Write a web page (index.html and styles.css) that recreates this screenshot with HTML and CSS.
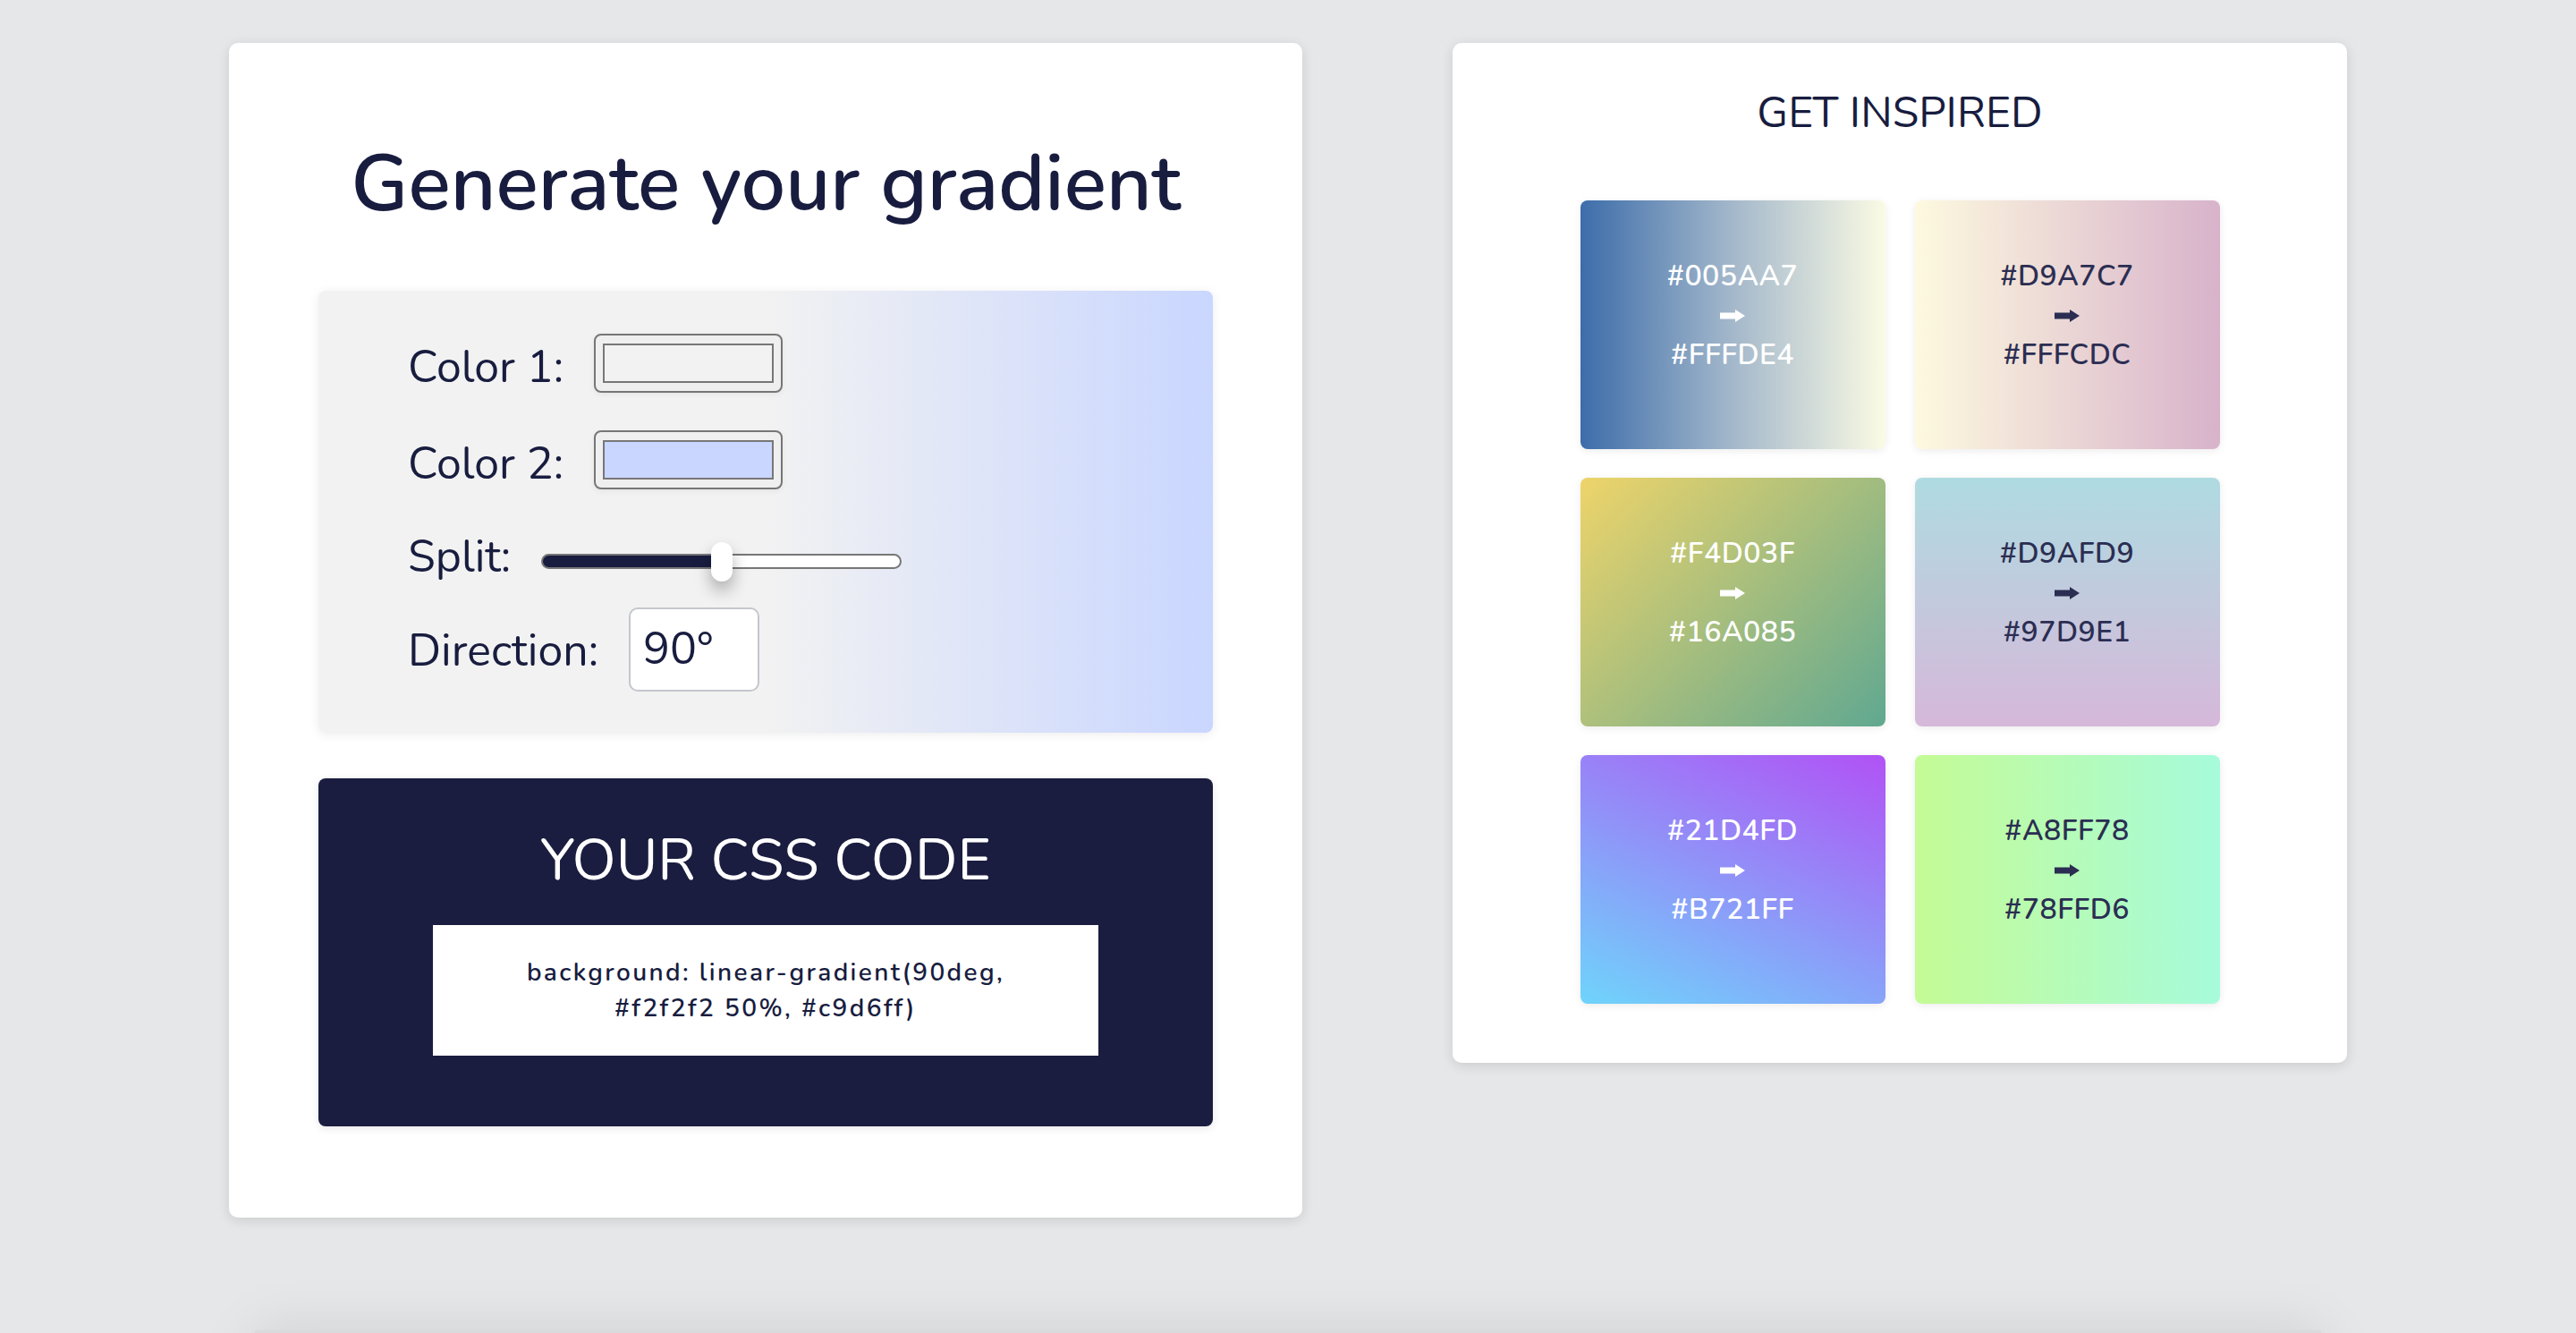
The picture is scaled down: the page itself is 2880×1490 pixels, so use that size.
FILE: index.html
```html
<!DOCTYPE html>
<html lang="en">
<head>
    <meta charset="UTF-8">
    <meta name="viewport" content="width=device-width, initial-scale=1.0">
    <title>Gradient Generator</title>
    <link rel="stylesheet" href="styles.css">
</head>
<body>
    <div class="wrapper">
        <div class="card generator">
            <h1>Generate your gradient</h1>

            <div class="controls">
                <div class="row">
                    <label for="color1">Color 1:</label>
                    <input type="color" id="color1" value="#f2f2f2">
                </div>
                <div class="row">
                    <label for="color2">Color 2:</label>
                    <input type="color" id="color2" value="#c9d6ff">
                </div>
                <div class="row split-row">
                    <label for="split">Split:</label>
                    <input type="range" id="split" min="0" max="100" value="50">
                </div>
                <div class="row">
                    <label for="direction">Direction:</label>
                    <input type="text" id="direction" value="90°">
                </div>
            </div>

            <div class="output">
                <h2>YOUR CSS CODE</h2>
                <div class="code">background: linear-gradient(90deg, #f2f2f2 50%, #c9d6ff)</div>
            </div>
        </div>

        <div class="card inspire">
            <h2>GET INSPIRED</h2>
            <div class="swatches">
                <div class="swatch swatch-1 light-text">
                    <span>#005AA7</span>
                    <span class="arrow"><svg width="28" height="14" viewBox="0 0 28 14"><path d="M0 3.5h17V0l11 7-11 7V10.5H0z" fill="currentColor"/></svg></span>
                    <span>#FFFDE4</span>
                </div>
                <div class="swatch swatch-2">
                    <span>#D9A7C7</span>
                    <span class="arrow"><svg width="28" height="14" viewBox="0 0 28 14"><path d="M0 3.5h17V0l11 7-11 7V10.5H0z" fill="currentColor"/></svg></span>
                    <span>#FFFCDC</span>
                </div>
                <div class="swatch swatch-3 light-text">
                    <span>#F4D03F</span>
                    <span class="arrow"><svg width="28" height="14" viewBox="0 0 28 14"><path d="M0 3.5h17V0l11 7-11 7V10.5H0z" fill="currentColor"/></svg></span>
                    <span>#16A085</span>
                </div>
                <div class="swatch swatch-4">
                    <span>#D9AFD9</span>
                    <span class="arrow"><svg width="28" height="14" viewBox="0 0 28 14"><path d="M0 3.5h17V0l11 7-11 7V10.5H0z" fill="currentColor"/></svg></span>
                    <span>#97D9E1</span>
                </div>
                <div class="swatch swatch-5 light-text">
                    <span>#21D4FD</span>
                    <span class="arrow"><svg width="28" height="14" viewBox="0 0 28 14"><path d="M0 3.5h17V0l11 7-11 7V10.5H0z" fill="currentColor"/></svg></span>
                    <span>#B721FF</span>
                </div>
                <div class="swatch swatch-6">
                    <span>#A8FF78</span>
                    <span class="arrow"><svg width="28" height="14" viewBox="0 0 28 14"><path d="M0 3.5h17V0l11 7-11 7V10.5H0z" fill="currentColor"/></svg></span>
                    <span>#78FFD6</span>
                </div>
            </div>
        </div>
    </div>

    <div class="next-section"></div>
</body>
</html>
```
FILE: styles.css
```css
body {
    font-family: 'Nunito', 'Lato', sans-serif;
    background-color: #e6e7e9;
    margin: 0;
    color: #181d3f;
}
.wrapper {
    display: flex;
    justify-content: center;
    align-items: flex-start;
    gap: 168px;
    padding-top: 48px;
}
.card {
    background: white;
    border-radius: 10px;
    box-shadow: 0 3px 14px rgba(0,0,0,0.12);
    box-sizing: border-box;
}
.generator {
    width: 1200px;
    padding: 105px 100px 102px;
}
h1 {
    margin: 0 0 66px;
    font-size: 88px;
    font-weight: 600;
    line-height: 1.2;
    text-align: center;
}
.controls {
    background: linear-gradient(90deg, #f2f2f2 50%, #c9d6ff);
    border-radius: 8px;
    box-shadow: 0 2px 12px rgba(0,0,0,0.08);
    padding: 48px 100px 46px;
}
.row {
    display: flex;
    align-items: center;
    height: 66px;
}
.row + .row {
    margin-top: 42px;
}
.row label {
    font-size: 50px;
    line-height: 60px;
    padding-top: 10px;
    margin-right: 34px;
}
.split-row {
    height: 60px;
    margin-top: 41px !important;
}
.split-row + .row {
    height: 94px;
    margin-top: 31px;
}
.split-row + .row label {
    padding-top: 4px;
}
input[type="color"] {
    -webkit-appearance: none;
    appearance: none;
    width: 211px;
    height: 66px;
    padding: 0;
    border: 2px solid #767676;
    border-radius: 8px;
    background: #efefef;
    box-shadow: 0 2px 6px rgba(0,0,0,0.06);
    cursor: pointer;
}
input[type="color"]::-webkit-color-swatch-wrapper {
    padding: 9px 8px;
}
input[type="color"]::-webkit-color-swatch {
    border: 2px solid #777;
    border-radius: 0;
}
input[type="range"] {
    -webkit-appearance: none;
    appearance: none;
    width: 403px;
    height: 17px;
    margin: 20px 0 0;
    border: 2px solid #777;
    border-radius: 9px;
    background: linear-gradient(to right, #181d3f 50%, #fff 50%);
    box-sizing: border-box;
    outline: none;
}
input[type="range"]::-webkit-slider-thumb {
    -webkit-appearance: none;
    width: 24px;
    height: 44px;
    border-radius: 12px;
    background: white;
    box-shadow: 0 10px 18px rgba(0,0,0,0.3);
    cursor: pointer;
}
#direction {
    width: 146px;
    height: 94px;
    box-sizing: border-box;
    padding: 0 14px;
    border: 2px solid #c4c7cd;
    border-radius: 10px;
    font-family: inherit;
    font-size: 50px;
    color: #181d3f;
    background: white;
}
.output {
    margin-top: 51px;
    background: #1a1d3f;
    border-radius: 8px;
    box-shadow: 0 2px 10px rgba(0,0,0,0.1);
    padding: 54px 0 79px;
    color: white;
    text-align: center;
}
.output h2 {
    margin: 0 0 34px;
    font-size: 64px;
    font-weight: 400;
    line-height: 1.2;
}
.code {
    width: 744px;
    margin: 0 auto;
    box-sizing: border-box;
    padding: 33px 60px;
    background: white;
    color: #181d3f;
    font-size: 28px;
    font-weight: 600;
    letter-spacing: 2.4px;
    line-height: 40px;
}
.inspire {
    width: 1000px;
    padding: 50px 0 66px;
}
.inspire h2 {
    margin: 0 0 68px;
    font-size: 48px;
    font-weight: 400;
    line-height: 1.2;
    text-align: center;
}
.swatches {
    display: grid;
    grid-template-columns: 341px 341px;
    grid-auto-rows: 278px;
    column-gap: 33px;
    row-gap: 32px;
    justify-content: center;
}
.swatch {
    display: flex;
    flex-direction: column;
    justify-content: center;
    align-items: center;
    padding-bottom: 20px;
    box-sizing: border-box;
    border-radius: 8px;
    box-shadow: 0 2px 10px rgba(0,0,0,0.08);
    font-size: 32px;
    font-weight: 600;
    letter-spacing: 0.5px;
    line-height: 44px;
    color: #2b2e52;
}
.light-text {
    color: white;
}
.arrow {
    display: flex;
    align-items: center;
    height: 44px;
}
.swatch-1 { background: linear-gradient(90deg, #3d6daa, #a4b8cb 50%, #fbfbe4); }
.swatch-2 { background: linear-gradient(90deg, #fdf9df, #d8b3cb); }
.swatch-3 { background: linear-gradient(135deg, #eed46a, #60a891); }
.swatch-4 { background: linear-gradient(180deg, #afdbe1, #d6b8da); }
.swatch-5 { background: linear-gradient(25deg, #6fd4fb, #b152f5); }
.swatch-6 { background: linear-gradient(90deg, #c4fb95, #a7fbdb); }
.next-section {
    width: 2310px;
    height: 200px;
    margin: 126px auto 0;
    background: #d9dadc;
    box-shadow: 0 0 60px rgba(0,0,0,0.1);
}
```
